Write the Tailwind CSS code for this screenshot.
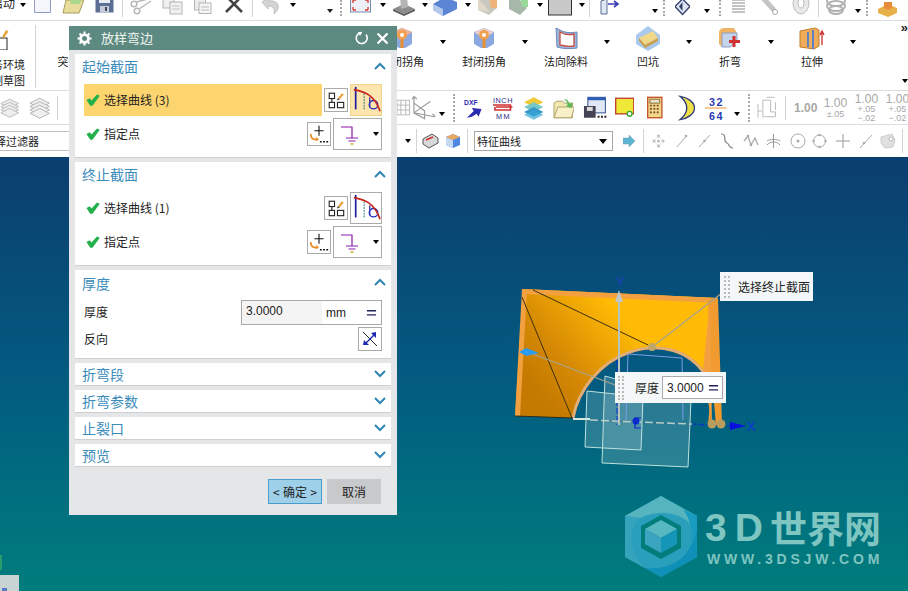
<!DOCTYPE html>
<html lang="zh"><head><meta charset="utf-8">
<script src="https://cdn.jsdelivr.net/npm/@tailwindcss/browser@4"></script>
</head>
<body class="bg-white">
<svg class="absolute w-0 h-0">
<defs>
<symbol id="chk" viewBox="0 0 14 12"><path d="M.5 6L3.800 4.200L5.500 6.500L11 .5L13.800 1.800L6.500 11.800H4.200Z" fill="#22b14c"/></symbol>
<symbol id="pick" viewBox="0 0 24 24"><g fill="none" stroke="#222" stroke-width="1.200"><rect x="4.600" y="4.600" width="5.800" height="5.800"/><rect x="4.600" y="14.600" width="5.800" height="5.800"/><rect x="13.600" y="14.600" width="6.800" height="5.800"/><path d="M7.500 10.400V14.600"/></g><path d="M14 10L18.500 4.500L20.500 6L16 11.500Z" fill="#e8a33c"/><path d="M14 10l-1 2.500 3-1z" fill="#333"/></symbol>
<symbol id="curve" viewBox="0 0 32 32"><g fill="none"><path d="M5 2V26" stroke="#1c1c9c" stroke-width="1.800"/><path d="M14 9V26" stroke="#1c6e6c" stroke-width="1" stroke-dasharray="2 1"/><path d="M20 13V24" stroke="#1c1c9c" stroke-width="1.200"/><circle cx="24" cy="21" r="4.500" stroke="#2030c0" stroke-width="1.500"/><path d="M3 5C14 7 25 10 31 28" stroke="#c8281c" stroke-width="1.800"/></g></symbol>
<symbol id="pt" viewBox="0 0 24 24"><path d="M12 3V14M7 8.500H17" stroke="#111" stroke-width="1.200"/><path d="M3 12C3 17 5 18 10 18" stroke="#e8902c" stroke-width="2" fill="none"/><path d="M9 15l3 3-3 2z" fill="#e8902c"/><path d="M13 20.500h2M16.500 20.500h2M20 20.500h2" stroke="#111" stroke-width="1.800"/></symbol>
<symbol id="gnd" viewBox="0 0 24 24"><g stroke="#8c1aa8" stroke-width="1.200" fill="none"><path d="M2 5H13V16M7 16H19M9.500 19H16.500"/></g><path d="M11.500 22H14.500" stroke="#c8a018" stroke-width="1.300"/></symbol>
<symbol id="gear" viewBox="0 0 16 16"><circle cx="8" cy="8" r="4.200" fill="none" stroke="#fff" stroke-width="3"/><path d="M8 .5V3M8 13V15.500M.5 8H3M13 8H15.500M2.700 2.700L4.500 4.500M11.500 11.500L13.300 13.300M2.700 13.300L4.500 11.500M11.500 4.500L13.300 2.700" stroke="#fff" stroke-width="2.200"/></symbol>
<symbol id="up" viewBox="0 0 12 8"><path d="M1 7L6 2L11 7" fill="none" stroke="#2f86b4" stroke-width="2"/></symbol>
<symbol id="down" viewBox="0 0 12 8"><path d="M1 1L6 6L11 1" fill="none" stroke="#2f86b4" stroke-width="2"/></symbol>
<symbol id="eq" viewBox="0 0 12 8"><path d="M1 1.500H11M1 6H11" stroke="#23235c" stroke-width="1.500"/></symbol>
<symbol id="layers" viewBox="0 0 22 24"><g stroke="#b4b4b4" fill="#efefef"><path d="M1 7L11 2L21 7L11 12Z"/><path d="M1 10.500L11 5.500L21 10.500L11 15.500Z"/><path d="M1 14L11 9L21 14L11 19Z"/><path d="M1 17.500L11 12.500L21 17.500L11 22.500Z"/></g></symbol>
</defs>
</svg>

<div class="relative w-[908px] h-[591px] overflow-hidden flex flex-col font-['Noto_Sans_CJK_SC','Noto_Sans',sans-serif] text-[12px] text-[#222]">

<!-- row 1 -->
<div class="flex items-start h-[21px] shrink-0 border-b border-[#dcdcdc] bg-white overflow-hidden">
 <span class="ml-[-9px] mt-[-7px] leading-[20px] w-[24px] whitespace-nowrap">启动</span>
 <span class="ml-[5px] mt-[3px] w-0 h-0 border-x-[3.5px] border-t-[4px] border-x-transparent border-t-black"></span>
 <svg class="ml-[8px] w-[17px] h-[20px]" viewBox="0 0 17 20"><path d="M.5 -5H16.500V12.500H.5Z" fill="#f4f6fb" stroke="#8f9cc0"/></svg>
 <svg class="ml-[11px] w-[22px] h-[20px]" viewBox="0 0 22 20"><path d="M1 13L4 0H22L17 13Z" fill="#e8dc9c" stroke="#a89c5c"/><path d="M10 -3L20 -2L18 4H8Z" fill="#a8d88c"/></svg>
 <svg class="ml-[11px] w-[19px] h-[20px]" viewBox="0 0 19 20"><rect x=".5" y="-5" width="18" height="17.500" fill="#5c6e94"/><rect x="4" y="-5" width="11" height="8" fill="#e8ecf4"/><rect x="5" y="6" width="9" height="6.500" fill="#c4ccdc"/><rect x="10" y="7" width="2" height="4" fill="#445"/></svg>
 <span class="ml-[8px] w-px h-[17px] bg-[#d4d4d4]"></span>
 <svg class="ml-[6px] w-[24px] h-[20px]" viewBox="0 0 24 20"><g fill="none" stroke="#b8b8b8" stroke-width="1.500"><circle cx="5" cy="4" r="2.800"/><circle cx="8" cy="11" r="2.800"/><path d="M7 2L23 -2M10 9L22 1"/></g></svg>
 <svg class="ml-[9px] w-[21px] h-[20px]" viewBox="0 0 21 20"><g fill="#f0f0f0" stroke="#b4b4b4"><rect x="1" y="-4" width="11" height="12"/><rect x="8" y="2" width="12" height="12"/></g><path d="M10 6h8M10 9h8" stroke="#c4c4c4"/></svg>
 <svg class="ml-[11px] w-[18px] h-[20px]" viewBox="0 0 18 20"><rect x=".5" y="-3" width="11" height="13" fill="#ededed" stroke="#b4b4b4"/><rect x="5" y="3" width="12" height="10.500" fill="#f6f6f6" stroke="#b4b4b4"/><path d="M7 7h8M7 10h8" stroke="#bbb"/></svg>
 <svg class="ml-[13px] w-[19px] h-[20px]" viewBox="0 0 19 20"><path d="M1 -4L17 12M17 -4L1 12" stroke="#444" stroke-width="2.600"/></svg>
 <span class="ml-[8px] w-px h-[17px] bg-[#d4d4d4]"></span>
 <svg class="ml-[8px] w-[20px] h-[20px]" viewBox="0 0 20 20"><path d="M1 2L7 -2V1C14 0 18 3 17 8C16 11 15 12 13 14C14 10 13 6 7 6V9Z" fill="#d4d4d4" stroke="#c0c0c0"/></svg>
 <span class="ml-[9px] mt-[3px] w-0 h-0 border-x-[3.5px] border-t-[4px] border-x-transparent border-t-black"></span>
 <span class="ml-[31px] mt-[9px] w-0 h-0 border-x-[3.5px] border-t-[4px] border-x-transparent border-t-[#222]"></span>
 <span class="ml-[7px] w-[3px] h-[16px] border-l-2 border-dotted border-[#aaa]"></span>
 <svg class="ml-[7px] w-[21px] h-[20px]" viewBox="0 0 21 20"><rect x=".5" y="-4" width="20" height="16" fill="#eef0f8" stroke="#7c88b0"/><path d="M3 0L6 0M3 0V3M18 0H15M18 0V3M3 10H6M3 10V7M18 10H15M18 10V7" stroke="#d8382c" stroke-width="1.300"/></svg>
 <span class="ml-[9px] mt-[3px] w-0 h-0 border-x-[3.5px] border-t-[4px] border-x-transparent border-t-black"></span>
 <svg class="ml-[6px] w-[24px] h-[20px]" viewBox="0 0 24 20"><path d="M1 9L12 4L23 9L12 14Z" fill="#8c8c8c"/><path d="M8 -4L15 -4L16 7L9 9Z" fill="#b4b4b4"/><path d="M1 9V11L12 16L23 11V9L12 14Z" fill="#5c5c5c"/></svg>
 <span class="ml-[6px] mt-[3px] w-0 h-0 border-x-[3.5px] border-t-[4px] border-x-transparent border-t-black"></span>
 <svg class="ml-[5px] w-[30px] h-[20px]" viewBox="0 0 30 20"><path d="M0 4L12 -3L24 2V9L10 16L0 10Z" fill="#5c84d4"/><path d="M0 4L10 9V16L0 10Z" fill="#b4c8ec"/></svg>
 <span class="ml-[2px] mt-[3px] w-0 h-0 border-x-[3.5px] border-t-[4px] border-x-transparent border-t-black"></span>
 <svg class="ml-[6px] w-[20px] h-[20px]" viewBox="0 0 20 20"><path d="M1 -2L12 -2L19 -2L20 8L12 15L1 10Z" fill="#c8c8c0"/><path d="M1 -2L13 12L1 10Z" fill="#e0d8c8"/><path d="M12 -2H20V8H14Z" fill="#f0b478"/></svg>
 <svg class="ml-[11px] w-[20px] h-[20px]" viewBox="0 0 20 20"><path d="M1 -2H10L19 8L12 15L1 9Z" fill="#a8b8a8"/><path d="M12 -2H20V7H14Z" fill="#98d898"/></svg>
 <span class="ml-[9px] mt-[3px] w-0 h-0 border-x-[3.5px] border-t-[4px] border-x-transparent border-t-black"></span>
 <svg class="ml-[5px] w-[24px] h-[20px]" viewBox="0 0 24 20"><rect x=".5" y="-4" width="23" height="19" fill="#c8c8c8" stroke="#333"/></svg>
 <span class="ml-[7px] mt-[3px] w-0 h-0 border-x-[3.5px] border-t-[4px] border-x-transparent border-t-black"></span>
 <span class="ml-[4px] w-px h-[17px] bg-[#d4d4d4]"></span>
 <svg class="ml-[10px] w-[20px] h-[20px]" viewBox="0 0 20 20"><path d="M1 1L7 -1V14H1Z" fill="#dfe6f4" stroke="#5c6e94"/><path d="M8 4H17M14 1L18 4L14 7" fill="none" stroke="#3c3cb4" stroke-width="1.600"/></svg>
 <span class="ml-[32px] mt-[9px] w-0 h-0 border-x-[3.5px] border-t-[4px] border-x-transparent border-t-black"></span>
 <span class="ml-[5px] w-[3px] h-[16px] border-l-2 border-dotted border-[#aaa]"></span>
 <svg class="ml-[9px] w-[15px] h-[20px]" viewBox="0 0 15 20"><path d="M7.500 -1L15 6.500L7.500 14.500L0 6.500Z" fill="#dde4f4" stroke="#39406c" stroke-width="1.400"/><path d="M7.500 2L4 6.500L7.500 11Z" fill="#39406c"/></svg>
 <span class="ml-[14px] mt-[9px] w-0 h-0 border-x-[3.5px] border-t-[4px] border-x-transparent border-t-black"></span>
 <span class="ml-[9px] w-[3px] h-[16px] border-l-2 border-dotted border-[#aaa]"></span>
 <svg class="ml-[9px] w-[15px] h-[20px]" viewBox="0 0 15 20"><g fill="none" stroke="#b0b0b0" stroke-width="1.300"><path d="M1 0H14M1 3H14M1 6H14M1 9H14M1 12H14"/></g></svg>
 <svg class="ml-[16px] w-[17px] h-[20px]" viewBox="0 0 17 20"><path d="M1 -2L12 10" stroke="#c4c4c4" stroke-width="5"/><circle cx="13" cy="12" r="2.500" fill="none" stroke="#aaa"/></svg>
 <svg class="ml-[12px] w-[20px] h-[20px]" viewBox="0 0 20 20"><ellipse cx="10" cy="3" rx="8" ry="11" fill="#e8e8e8" stroke="#c0c0c0"/><ellipse cx="10" cy="3" rx="3" ry="5" fill="#fff" stroke="#bbb"/></svg>
 <span class="ml-[7px] w-px h-[17px] bg-[#d4d4d4]"></span>
 <svg class="ml-[7px] w-[21px] h-[20px]" viewBox="0 0 21 20"><g fill="none" stroke="#b0b0b0" stroke-width="2"><ellipse cx="10" cy="1" rx="9" ry="5"/><ellipse cx="10" cy="6" rx="9" ry="5"/><ellipse cx="10" cy="10" rx="7" ry="4"/></g></svg>
 <span class="ml-[8px] mt-[9px] w-0 h-0 border-x-[3.5px] border-t-[4px] border-x-transparent border-t-black"></span>
 <span class="ml-[5px] w-[3px] h-[16px] border-l-2 border-dotted border-[#aaa]"></span>
 <svg class="ml-[9px] w-[19px] h-[20px]" viewBox="0 0 19 20"><path d="M0 9L10 4L19 8V13L10 17L0 13Z" fill="#e8b048"/><path d="M6 2H14V8L10 10L6 8Z" fill="#e88c3c"/></svg>
</div>

<!-- row 2 -->
<div class="flex h-[70px] shrink-0 border-b border-[#dcdcdc] bg-white text-[11px]">
 <div class="w-[36px] border-r border-[#d4d4d4] h-[63px] mt-[4px] shrink-0 flex flex-col items-end pr-[10px]">
  <svg class="self-start w-[9px] h-[22px] mt-[3px]" viewBox="0 0 9 22"><rect x="-6" y="10" width="13" height="12" fill="#fff" stroke="#222"/><path d="M2 9L6 2L8.500 3.500L4 10Z" fill="#e8a33c"/></svg>
  <span class="leading-[16px] mt-[6px] whitespace-nowrap">务环境</span>
  <span class="leading-[16px] whitespace-nowrap">制草图</span>
 </div>
 <div class="ml-[-3px] flex shrink-0">
  <div class="relative w-[82px] flex flex-col items-center shrink-0"><span class="mt-[31px] leading-[18px]">突出块</span></div>
  <div class="relative w-[82px] shrink-0"></div>
  <div class="relative w-[82px] shrink-0"></div>
  <div class="relative w-[82px] shrink-0"></div>
  <div class="relative w-[82px] flex flex-col items-center shrink-0">
   <svg class="mt-[6px] w-[26px] h-[25px]" viewBox="0 0 26 25"><path d="M3 5L13 1L23 5V17L16 21H10L3 17Z" fill="#8ca8e0"/><path d="M3 5L13 1L23 5L13 12Z" fill="#f0b090"/><circle cx="13" cy="8" r="5" fill="#f0a050"/><circle cx="13" cy="8" r="2" fill="#fff"/><path d="M13 12V21" stroke="#e89030" stroke-width="3"/></svg>
   <span class="leading-[18px]">封闭拐角</span>
   <span class="absolute right-[-3px] top-[19px] w-0 h-0 border-x-[3.5px] border-t-[4px] border-x-transparent border-t-black"></span>
  </div>
  <div class="relative w-[82px] flex flex-col items-center shrink-0">
   <svg class="mt-[6px] w-[26px] h-[25px]" viewBox="0 0 26 25"><path d="M3 5L13 1L23 5V17L16 21H10L3 17Z" fill="#8ca8e0"/><path d="M3 5L13 1L23 5L13 12Z" fill="#e8d0c8"/><circle cx="13" cy="8" r="5" fill="#f0a050"/><circle cx="13" cy="8" r="2" fill="#fff"/><path d="M13 12V21" stroke="#e89030" stroke-width="3"/></svg>
   <span class="leading-[18px]">封闭拐角</span>
   <span class="absolute right-[-3px] top-[19px] w-0 h-0 border-x-[3.5px] border-t-[4px] border-x-transparent border-t-black"></span>
  </div>
  <div class="relative w-[82px] flex flex-col items-center shrink-0">
   <svg class="mt-[6px] w-[26px] h-[25px]" viewBox="0 0 26 25"><path d="M3 1L7 3C12 6 18 6 24 5V21C18 22 10 22 4 20Z" fill="#9ab4dc" stroke="#6c88b8"/><path d="M7 5C12 8 17 8 21 7V19C16 20 11 19 7 18Z" fill="#fff" stroke="#c84c3c" stroke-width="1.300"/></svg>
   <span class="leading-[18px]">法向除料</span>
   <span class="absolute right-[-3px] top-[19px] w-0 h-0 border-x-[3.5px] border-t-[4px] border-x-transparent border-t-black"></span>
  </div>
  <div class="relative w-[82px] flex flex-col items-center shrink-0">
   <svg class="mt-[5px] w-[26px] h-[26px]" viewBox="0 0 26 26"><path d="M13 0L25 9V18L13 25L1 18V9Z" fill="#a8c8ec"/><path d="M4 12L18 5L23 12L10 19Z" fill="#f0d888"/><path d="M10 19L23 12V15L10 22L4 15V12Z" fill="#c8a050"/></svg>
   <span class="leading-[18px]">凹坑</span>
   <span class="absolute right-[-3px] top-[19px] w-0 h-0 border-x-[3.5px] border-t-[4px] border-x-transparent border-t-black"></span>
  </div>
  <div class="relative w-[82px] flex flex-col items-center shrink-0">
   <svg class="mt-[6px] w-[24px] h-[25px]" viewBox="0 0 24 25"><path d="M1 6C1 2 4 1 7 1H16L19 6H4V20L1 17Z" fill="#f0b464"/><path d="M4 6H19V14L12 20H4Z" fill="#c4d4ec" stroke="#8ca0c4"/><path d="M16 9V20M11 14.500H22" stroke="#d03030" stroke-width="3"/></svg>
   <span class="leading-[18px]">折弯</span>
   <span class="absolute right-[-3px] top-[19px] w-0 h-0 border-x-[3.5px] border-t-[4px] border-x-transparent border-t-black"></span>
  </div>
  <div class="relative w-[82px] flex flex-col items-center shrink-0">
   <svg class="mt-[6px] w-[26px] h-[25px]" viewBox="0 0 26 25"><path d="M1 4L16 1L20 3V19L15 22L1 20Z" fill="#f0ac58" stroke="#c47c28"/><path d="M9 5V20M14 3V22" stroke="#5c84c4" stroke-width="2"/><path d="M23 18V5M21 8L23 4L25 8" stroke="#d03030" fill="none" stroke-width="1.300"/></svg>
   <span class="leading-[18px]">拉伸</span>
   <span class="absolute right-[-3px] top-[19px] w-0 h-0 border-x-[3.5px] border-t-[4px] border-x-transparent border-t-black"></span>
  </div>
  <div class="w-[55px] shrink-0 flex flex-col items-end"><span class="mt-[-1px] font-bold leading-[16px] text-[13px] font-['Liberation_Sans']">»</span><span class="mt-[43px] w-0 h-0 border-x-[3.5px] border-t-[4px] border-x-transparent border-t-black"></span></div>
 </div>
</div>

<!-- row 3 -->
<div class="flex items-center h-[34px] shrink-0 border-b border-[#dcdcdc] bg-white">
 <svg class="w-[20px] h-[24px]"><use href="#layers"/></svg>
 <svg class="ml-[10px] w-[22px] h-[24px]"><use href="#layers"/></svg>
 <span class="ml-[6px] w-px h-[24px] bg-[#d4d4d4]"></span>
 <svg class="ml-[338px] w-[16px] h-[22px]" viewBox="0 0 16 22"><g fill="none" stroke="#b8b8b8"><rect x="1" y="3" width="13" height="15"/><path d="M1 8H14M1 13H14M5 3V18M10 3V18"/></g></svg>
 <svg class="w-[27px] h-[26px]" viewBox="0 0 27 26"><g fill="none" stroke="#9c9c9c" stroke-width="1.200"><path d="M3 1V18L24 22M3 18L20 6M6 4L3 1L1 4M22 19L25 22"/><path d="M3 8L14 16V24L3 18"/></g></svg>
 <span class="ml-[1px] mt-[12px] w-0 h-0 border-x-[3.5px] border-t-[4px] border-x-transparent border-t-black"></span>
 <span class="ml-[8px] w-[3px] h-[28px] border-l-2 border-dotted border-[#aaa]"></span>
 <svg class="ml-[8px] w-[20px] h-[24px]" viewBox="0 0 20 24"><text x="0" y="9" font-size="7" font-weight="700" fill="#2a2ab0" font-family="Liberation Sans">DXF</text><path d="M3 22L10 15L8 12L18 13L15 21L13 18L8 21Z" fill="#2a2ab0"/></svg>
 <svg class="ml-[9px] w-[22px] h-[24px]" viewBox="0 0 22 24"><text x="1" y="7" font-size="7.500" fill="#2c2c8c" font-family="Liberation Sans" textLength="20">INCH</text><text x="4" y="23" font-size="7.500" fill="#2c2c8c" font-family="Liberation Sans" textLength="14">MM</text><path d="M1 9H19V14H3V11M21 11H4" stroke="#d03030" fill="none" stroke-width="1.600"/></svg>
 <svg class="ml-[11px] w-[20px] h-[24px]" viewBox="0 0 20 24"><path d="M0 6L10 1L20 6L10 11Z" fill="#f0c838"/><path d="M0 11L10 6L20 11L10 16Z" fill="#78c8c8"/><path d="M0 16L10 11L20 16L10 21Z" fill="#3898c8"/><path d="M0 19L10 14L20 19L10 24Z" fill="#38a8d8" opacity=".7"/></svg>
 <svg class="ml-[9px] w-[22px] h-[24px]" viewBox="0 0 22 24"><path d="M1 22V7L4 5H10L12 7H20V22Z" fill="#f0e8b0" stroke="#b0a468"/><path d="M1 22L5 11H22L19 22Z" fill="#f8f0c8" stroke="#b0a468"/><path d="M11 3C15 3 16 5 17 8L20 6L19 12L13 10L15 9C15 6 14 5 11 3Z" fill="#58b858"/></svg>
 <svg class="ml-[9px] w-[24px] h-[24px]" viewBox="0 0 24 24"><rect x="5" y="1" width="18" height="16" fill="#dfe8f4" stroke="#2c4c8c"/><rect x="5" y="1" width="18" height="3" fill="#2c5cb4"/><rect x="1" y="10" width="12" height="12" fill="#445"/><rect x="4" y="11" width="6" height="4" fill="#ddd"/><path d="M15 21h2M18.500 21h2M22 21h2" stroke="#222" stroke-width="2"/></svg>
 <svg class="ml-[8px] w-[20px] h-[24px]" viewBox="0 0 20 24"><rect x=".7" y="2" width="18.600" height="16" fill="#f0e838" stroke="#c0402c" stroke-width="1.400"/><circle cx="15" cy="18" r="2.500" fill="#fff" stroke="#38a838" stroke-width="1.400"/></svg>
 <svg class="ml-[13px] w-[16px] h-[24px]" viewBox="0 0 16 24"><rect x=".7" y="1" width="14.600" height="21" fill="#f0d888" stroke="#c4582c" stroke-width="1.400"/><rect x="3" y="3" width="10" height="4" fill="#e8e4c8" stroke="#8c6c3c"/><path d="M3 9.500H13M3 13H13M3 16.500H13" stroke="#7c4c2c" stroke-width="1.800" stroke-dasharray="2 1.500"/></svg>
 <svg class="ml-[15px] w-[18px] h-[26px]" viewBox="0 0 18 26"><path d="M2 1C10 2 17 7 17 13C17 19 10 24 2 25C7 21 9 17 9 13C9 9 7 5 2 1Z" fill="#f0e048" stroke="#2c3c7c" stroke-width="1.400"/></svg>
 <svg class="ml-[10px] w-[22px] h-[26px]" viewBox="0 0 22 26"><text x="4" y="11" font-size="11" font-weight="700" fill="#2a3ab0" font-family="Liberation Sans" textLength="14">32</text><text x="4" y="25" font-size="11" font-weight="700" fill="#2a3ab0" font-family="Liberation Sans" textLength="14">64</text><path d="M0 13H22" stroke="#e89030"/></svg>
 <span class="ml-[7px] mt-[12px] w-0 h-0 border-x-[3.5px] border-t-[4px] border-x-transparent border-t-black"></span>
 <span class="ml-[8px] w-[3px] h-[28px] border-l-2 border-dotted border-[#aaa]"></span>
 <svg class="ml-[6px] w-[22px] h-[24px]" viewBox="0 0 22 24"><g fill="none" stroke="#bbb"><path d="M6 4H14V16H19V21H6Z"/><path d="M1 8V22M1 15H5M10 1H18M19 6V14"/></g></svg>
 <span class="ml-[7px] w-px h-[24px] bg-[#d4d4d4]"></span>
 <span class="ml-[8px] w-[21px] text-[12px] text-[#a8a8a8] font-['Liberation_Sans'] font-bold whitespace-nowrap">1.00</span>
 <div class="ml-[10px] w-[21px] flex flex-col items-center text-[#a8a8a8] font-['Liberation_Sans'] leading-[10px]"><span class="text-[12px] leading-[12px]">1.00</span><span class="text-[9px]">±.05</span></div>
 <div class="ml-[10px] w-[21px] flex flex-col items-center text-[#a8a8a8] font-['Liberation_Sans'] leading-[9px]"><span class="text-[12px] leading-[12px]">1.00</span><span class="text-[9px]">+.05</span><span class="text-[9px]">−.02</span></div>
 <div class="ml-[10px] w-[21px] flex flex-col items-center text-[#a8a8a8] font-['Liberation_Sans'] leading-[9px]"><span class="text-[12px] leading-[12px]">1.00</span><span class="text-[9px]">+.05</span><span class="text-[9px]">−.02</span></div>
</div>

<!-- row 4 -->
<div class="flex items-center h-[32px] shrink-0 bg-white">
 <div class="w-[100px] h-[20px] ml-[-5px] border border-[#c0c0c0] text-[11px] leading-[18px] whitespace-nowrap overflow-hidden"><span class="ml-[-1px]">择过滤器</span></div>
 <span class="ml-[310px] w-0 h-0 border-x-[3.5px] border-t-[4px] border-x-transparent border-t-black"></span>
 <span class="ml-[5px] w-px h-[24px] bg-[#d4d4d4]"></span>
 <svg class="ml-[5px] w-[17px] h-[16px]" viewBox="0 0 17 16"><path d="M1 6L10 1L16 5V10L7 15L1 11Z" fill="#d8d8d8" stroke="#555"/><path d="M4 7L11 4" stroke="#d03030" stroke-width="1.500"/></svg>
 <svg class="ml-[6px] w-[16px] h-[16px]" viewBox="0 0 16 16"><path d="M1 4L8 1L15 4V12L8 15L1 12Z" fill="#4c88e0"/><path d="M1 4L8 7V15L1 12Z" fill="#c4d8f4"/><path d="M1 4L8 1L15 4L8 7Z" fill="#e8a860"/></svg>
 <span class="ml-[6px] w-px h-[24px] bg-[#d4d4d4]"></span>
 <div class="ml-[6px] w-[139px] h-[20px] border border-[#a8a8a8] flex items-center justify-between pl-[2px] pr-[5px]"><span class="text-[11px]">特征曲线</span><span class="w-0 h-0 border-x-[4px] border-t-[5px] border-x-transparent border-t-black"></span></div>
 <svg class="ml-[10px] w-[12px] h-[12px]" viewBox="0 0 12 12"><path d="M0 3H6V0L12 6L6 12V9H0Z" fill="#5cb4d4" stroke="#7c9cac" stroke-width=".5"/></svg>
 <span class="ml-[8px] w-px h-[24px] bg-[#d4d4d4]"></span>
 <svg class="ml-[7px] w-[15px] h-[16px]" viewBox="0 0 15 16"><g fill="#bbb"><circle cx="3" cy="8" r="1.500"/><circle cx="12" cy="8" r="1.500"/><circle cx="7.500" cy="3" r="1.500"/><circle cx="7.500" cy="13" r="1.500"/><circle cx="7.500" cy="8" r="1.500"/></g><path d="M3 8L7.500 3L12 8L7.500 13Z" fill="none" stroke="#ccc" stroke-dasharray="1 1"/></svg>
 <svg class="ml-[10px] w-[12px] h-[14px]" viewBox="0 0 12 14"><path d="M1 13L11 1" stroke="#aaa"/><circle cx="10" cy="2" r="1.300" fill="#aaa"/></svg>
 <svg class="ml-[10px] w-[13px] h-[14px]" viewBox="0 0 13 14"><path d="M1 13L12 1" stroke="#aaa"/><circle cx="6.500" cy="7" r="1.300" fill="#aaa"/></svg>
 <svg class="ml-[9px] w-[13px] h-[16px]" viewBox="0 0 13 16"><path d="M1 1C8 1 2 8 7 10C10 11 8 15 13 15" fill="none" stroke="#888" stroke-width="1.200"/></svg>
 <svg class="ml-[10px] w-[16px] h-[16px]" viewBox="0 0 16 16"><path d="M1 8L5 3L8 12L12 5L15 12" fill="none" stroke="#aaa" stroke-width="1.300"/><circle cx="5" cy="3" r="1.300" fill="#aaa"/><circle cx="8" cy="12" r="1.300" fill="#aaa"/></svg>
 <svg class="ml-[7px] w-[15px] h-[16px]" viewBox="0 0 15 16"><path d="M7.500 1V15M1 8C3 6 12 6 14 8M1 12C4 8 11 8 14 12" fill="none" stroke="#999"/></svg>
 <svg class="ml-[9px] w-[16px] h-[16px]" viewBox="0 0 16 16"><circle cx="8" cy="8" r="7" fill="none" stroke="#aaa"/><circle cx="8" cy="8" r="1.500" fill="#aaa"/></svg>
 <svg class="ml-[6px] w-[15px] h-[16px]" viewBox="0 0 15 16"><circle cx="7.500" cy="8" r="6" fill="none" stroke="#aaa"/><g fill="#aaa"><circle cx="7.500" cy="2" r="1.200"/><circle cx="7.500" cy="14" r="1.200"/><circle cx="1.500" cy="8" r="1.200"/><circle cx="13.500" cy="8" r="1.200"/></g></svg>
 <svg class="ml-[9px] w-[14px] h-[14px]" viewBox="0 0 14 14"><path d="M7 0V14M0 7H14" stroke="#999"/></svg>
 <svg class="ml-[10px] w-[12px] h-[14px]" viewBox="0 0 12 14"><path d="M0 14L12 1" stroke="#aaa"/><circle cx="4" cy="9" r="1.300" fill="#aaa"/></svg>
 <svg class="ml-[8px] w-[16px] h-[16px]" viewBox="0 0 16 16"><path d="M1 4L12 1L15 7L13 14L5 15L1 10Z" fill="#e0e0e0" stroke="#ccc"/><circle cx="11" cy="6" r="2" fill="#fff" stroke="#bbb"/></svg>
 <span class="ml-[6px] w-px h-[24px] bg-[#d4d4d4]"></span>
</div>

<!-- canvas -->
<div class="relative flex-1 bg-gradient-to-b from-[#0b3e70] via-[#035a80] to-[#017d7c]">
 <svg class="absolute inset-0 w-[908px] h-[434px]" viewBox="0 157 908 434">
  <defs>
   <linearGradient id="o" x1="540" y1="395" x2="625" y2="320" gradientUnits="userSpaceOnUse"><stop offset="0" stop-color="#c47a00"/><stop offset=".35" stop-color="#d48804"/><stop offset="1" stop-color="#ffbb05"/></linearGradient>
  </defs>
  <path d="M523 289L718 298L713 350L703 372C690 350 660 342 630 352C600 362 578 390 573 418L515 416Z" fill="url(#o)"/>
  <path d="M523 289L718 298L717 303L523 294Z" fill="#f2a040"/>
  <path d="M522 289L527 290L520 416H515Z" fill="#f2a040"/>
  <path d="M708 300L718 298L722 425H716L712 380L708 425H711Z" fill="#f09a30"/>
  <path d="M703 370L710 300L712 425Z" fill="#f2a040"/>
  <path d="M573 418C578 390 600 362 630 352C660 342 690 350 706 376" fill="none" stroke="#e8a868" stroke-width="3"/>
  <path d="M573 418C578 390 600 362 630 352C660 342 690 350 706 376" fill="none" stroke="#c8c0a8" stroke-width="1" stroke-dasharray="2 2"/>
  <path d="M533 290L648 345M522 297L572 418" stroke="#3c3010" stroke-width="1" fill="none"/>
  <path d="M515 416L573 418" stroke="#2c2c1c" stroke-width="1"/>
  <path d="M573 419H590" stroke="#d8e8e0" stroke-width="2"/>
  <!-- planes -->
  <g fill="#cfe8e4" fill-opacity=".2" stroke="#bfe0dc" stroke-width="1">
   <path d="M587 391L643 397L641 450L585 447Z"/>
   <path d="M605 376L691 400L688 467L602 463Z"/>
  </g>
  <path d="M628 354L682 358L683 420M628 354L626 420" fill="none" stroke="#7c9ce8" stroke-width="1"/>
  <!-- axes -->
  <path d="M619 295V425" stroke="#b4c4c0" stroke-width="2"/>
  <path d="M619 290L615 302H623Z" fill="#c4c8c4"/>
  <path d="M617 360V425" stroke="#0c30d0" stroke-width="1" stroke-dasharray="6 2"/>
  <path d="M590 420L636 422L692 424" stroke="#b8ccc8" stroke-width="1.500" stroke-dasharray="8 3"/>
  <path d="M692 424L730 426" stroke="#0c30d0" stroke-width="1.200" stroke-dasharray="5 2"/>
  <circle cx="636" cy="421" r="3.500" fill="#0c30d0"/>
  <path d="M641 418H635V428H641" fill="none" stroke="#1020d0" stroke-width="1.200"/>
  <path d="M730 422L746 426L730 430Z" fill="#0a10e0"/>
  <text x="747" y="431" font-size="13" fill="#1030e0" font-family="Liberation Sans">X</text>
  <text x="616" y="286" font-size="13" fill="#1c40c0" font-family="Liberation Sans">Y</text>
  <!-- leaders -->
  <path d="M652 347L722 293M530 353L618 386" stroke="#a8a48c" stroke-width="1.300" fill="none"/>
  <circle cx="652" cy="347" r="4" fill="#c0a868"/>
  <circle cx="712" cy="424" r="4.500" fill="#b89c5c"/>
  <circle cx="721" cy="424" r="4.500" fill="#b89c5c"/>
  <path d="M519 352L526 348L539 353L526 356Z" fill="#2c9cf0"/>
  <!-- logo -->
  <path d="M661 496L697 516V557L661 577L625 557V516Z" fill="#2a9fbc"/>
  <path d="M661 496L697 516V536C690 512 660 508 640 518L625 516Z" fill="#55b4bd"/>
  <path d="M697 516V557L679 567C693 550 697 530 683 509Z" fill="#1a9cc0"/>
  <path d="M697 557L661 577L645 568C670 570 690 560 697 530Z" fill="#0f90b8"/>
  <path d="M625 516V557L645 568C630 555 626 530 640 518Z" fill="#36a3bd"/>
  <path d="M661 515L681 526V548L661 559L641 548V526Z" fill="#027d7c"/>
  <path d="M661 520L677 529L661 538L645 529Z" fill="#58b8c2"/>
  <path d="M645 529L661 538V553L645 544Z" fill="#3ba5c0"/>
  <path d="M677 529L661 538V553L677 544Z" fill="#1596b9"/>
  <!-- corner remnants -->
  <path d="M1 555V570" stroke="#3aa868" stroke-width="1.500"/>
 </svg>

 <!-- watermark -->
 <div class="absolute left-[705px] top-[349px] flex flex-col text-[#7fc5c1]">
  <div class="flex items-center h-[42px] font-bold leading-none whitespace-nowrap"><span class="font-['Liberation_Sans'] text-[39px] tracking-[8px] w-[65px]">3D</span><span class="text-[37px]">世界网</span></div>
  <div class="mt-[5px] ml-[2px] font-['Liberation_Sans'] text-[14px] tracking-[3.8px] leading-[13px] font-bold whitespace-nowrap">WWW.3DSJW.COM</div>
 </div>

 <!-- bottom-left remnant -->
 <div class="absolute left-0 top-[418px] w-[19px] h-[16px] bg-[#c8d4d4] flex items-end pl-[2px]"><span class="w-[5px] h-[3px] bg-[#5c78c8]"></span></div>

 <!-- handles -->
 <div class="absolute left-[720px] top-[115px] w-[93px] h-[29px] bg-[#f3f7f7] flex items-center pl-[4px]">
  <span class="w-[6px] h-[22px] border-x-2 border-dotted border-[#bbb]"></span><span class="ml-[8px] text-[12px] text-[#222] whitespace-nowrap">选择终止截面</span>
 </div>
 <div class="absolute left-[615px] top-[215px] w-[111px] h-[31px] bg-[#f3f7f7] flex items-center pl-[3px]">
  <span class="w-[6px] h-[24px] border-x-2 border-dotted border-[#bbb]"></span><span class="ml-[11px] text-[12px] text-[#222]">厚度</span>
  <div class="ml-[3px] w-[61px] h-[23px] border border-[#aaa] bg-white flex items-center justify-between pl-[4px] pr-[3px] font-['Liberation_Sans'] text-[12px]"><span>3.0000</span><svg class="w-[11px] h-[8px]"><use href="#eq"/></svg></div>
 </div>
</div>

<!-- dialog -->
<div class="absolute left-[69px] top-[26px] w-[328px] h-[489px] bg-[#e5e6e7] flex flex-col">
 <div class="h-[24px] bg-[#5d8a80] flex items-center text-white shrink-0 pl-[8px] pr-[8px]">
  <svg class="w-[15px] h-[15px]"><use href="#gear"/></svg>
  <span class="ml-[9px] text-[13px] text-[#eef4f2]">放样弯边</span>
  <svg class="ml-auto w-[14px] h-[14px]" viewBox="0 0 14 14"><path d="M11 3.500A5.500 5.500 0 1 1 7 1.500" fill="none" stroke="#fff" stroke-width="1.600"/><path d="M3 1L7 1.500L5 5Z" fill="#fff"/></svg>
  <svg class="ml-[7px] w-[13px] h-[13px]" viewBox="0 0 13 13"><path d="M1.500 1.500L11.500 11.500M11.500 1.500L1.500 11.500" stroke="#fff" stroke-width="2.200"/></svg>
 </div>
 <div class="flex flex-col gap-[4px] px-[6px] pt-[4px]">

  <!-- panel 1 -->
  <div class="h-[104px] bg-white border-b border-[#cfcfcf] flex flex-col">
   <div class="h-[24px] flex items-center justify-between pl-[7px] pr-[5px]"><span class="text-[14px] mt-[1px] text-[#3b8cba]">起始截面</span><svg class="w-[12px] h-[8px]"><use href="#up"/></svg></div>
   <div class="h-[32px] mt-[6px] ml-[9px] flex items-center">
    <div class="w-[238px] h-[32px] bg-[#fdd56e] flex items-center pl-[2px]"><svg class="w-[14px] h-[12px]"><use href="#chk"/></svg><span class="ml-[4px]">选择曲线 (3)</span></div>
    <button class="ml-[2px] w-[24px] h-[24px] border border-[#aaa] bg-white"><svg class="w-[22px] h-[22px]"><use href="#pick"/></svg></button>
    <button class="ml-[2px] w-[32px] h-[32px] border border-[#f0d48c] bg-[#fde5b0]"><svg class="w-[30px] h-[30px]"><use href="#curve"/></svg></button>
   </div>
   <div class="h-[32px] mt-[2px] ml-[9px] flex items-center">
    <div class="w-[221px] flex items-center pl-[2px]"><svg class="w-[14px] h-[12px]"><use href="#chk"/></svg><span class="ml-[4px]">指定点</span></div>
    <button class="ml-[2px] w-[24px] h-[24px] border border-[#aaa] bg-white"><svg class="w-[22px] h-[22px]"><use href="#pt"/></svg></button>
    <div class="ml-[2px] w-[49px] h-[32px] border border-[#aaa] bg-white flex items-center pl-[5px]"><svg class="w-[24px] h-[24px]"><use href="#gnd"/></svg><span class="ml-[10px] w-0 h-0 border-x-[3px] border-t-[4px] border-x-transparent border-t-black"></span></div>
   </div>
  </div>

  <!-- panel 2 -->
  <div class="h-[104px] bg-white border-b border-[#cfcfcf] flex flex-col">
   <div class="h-[24px] flex items-center justify-between pl-[7px] pr-[5px]"><span class="text-[14px] mt-[1px] text-[#3b8cba]">终止截面</span><svg class="w-[12px] h-[8px]"><use href="#up"/></svg></div>
   <div class="h-[32px] mt-[6px] ml-[9px] flex items-center">
    <div class="w-[238px] h-[32px] flex items-center pl-[2px]"><svg class="w-[14px] h-[12px]"><use href="#chk"/></svg><span class="ml-[4px]">选择曲线 (1)</span></div>
    <button class="ml-[2px] w-[24px] h-[24px] border border-[#aaa] bg-white"><svg class="w-[22px] h-[22px]"><use href="#pick"/></svg></button>
    <button class="ml-[2px] w-[32px] h-[32px] border border-[#aaa] bg-white"><svg class="w-[30px] h-[30px]"><use href="#curve"/></svg></button>
   </div>
   <div class="h-[32px] mt-[2px] ml-[9px] flex items-center">
    <div class="w-[221px] flex items-center pl-[2px]"><svg class="w-[14px] h-[12px]"><use href="#chk"/></svg><span class="ml-[4px]">指定点</span></div>
    <button class="ml-[2px] w-[24px] h-[24px] border border-[#aaa] bg-white"><svg class="w-[22px] h-[22px]"><use href="#pt"/></svg></button>
    <div class="ml-[2px] w-[49px] h-[32px] border border-[#aaa] bg-white flex items-center pl-[5px]"><svg class="w-[24px] h-[24px]"><use href="#gnd"/></svg><span class="ml-[10px] w-0 h-0 border-x-[3px] border-t-[4px] border-x-transparent border-t-black"></span></div>
   </div>
  </div>

  <!-- panel 3 -->
  <div class="h-[89px] bg-white border-b border-[#cfcfcf] flex flex-col">
   <div class="h-[24px] flex items-center justify-between pl-[7px] pr-[5px]"><span class="text-[14px] mt-[2px] text-[#3b8cba]">厚度</span><svg class="w-[12px] h-[8px]"><use href="#up"/></svg></div>
   <div class="mt-[6px] ml-[9px] flex items-center h-[25px]">
    <span class="w-[157px] mb-[1px]">厚度</span>
    <div class="w-[141px] h-[25px] border border-[#a8a8a8] bg-white flex items-center"><span class="w-[80px] h-[23px] bg-[#f4f4f4] pl-[4px] leading-[21px] font-['Liberation_Sans'] text-[12px]">3.0000</span><span class="ml-[4px] text-[12px] font-['Liberation_Sans']">mm</span><svg class="ml-auto mr-[4px] w-[11px] h-[8px]"><use href="#eq"/></svg></div>
   </div>
   <div class="mt-[2px] ml-[9px] flex items-center h-[24px]">
    <span class="w-[274px]">反向</span>
    <button class="w-[24px] h-[24px] border border-[#aaa] bg-white flex items-center justify-center"><svg class="w-[18px] h-[18px]" viewBox="0 0 18 18"><path d="M2 2L16 16" stroke="#222"/><path d="M4 14L14 4" stroke="#1c2cb0" stroke-width="1.500"/><path d="M15 2L15 8L10 3ZM2 15L8 15L3 10Z" fill="#1c2cb0"/></svg></button>
   </div>
  </div>

  <div class="h-[23px] bg-white border-b border-[#cfcfcf] flex items-center justify-between pl-[7px] pr-[5px]"><span class="text-[14px] mt-[1px] text-[#3b8cba]">折弯段</span><svg class="w-[12px] h-[8px] mb-[1px]"><use href="#down"/></svg></div>
  <div class="h-[23px] bg-white border-b border-[#cfcfcf] flex items-center justify-between pl-[7px] pr-[5px]"><span class="text-[14px] mt-[1px] text-[#3b8cba]">折弯参数</span><svg class="w-[12px] h-[8px] mb-[1px]"><use href="#down"/></svg></div>
  <div class="h-[23px] bg-white border-b border-[#cfcfcf] flex items-center justify-between pl-[7px] pr-[5px]"><span class="text-[14px] mt-[1px] text-[#3b8cba]">止裂口</span><svg class="w-[12px] h-[8px] mb-[1px]"><use href="#down"/></svg></div>
  <div class="h-[23px] bg-white border-b border-[#cfcfcf] flex items-center justify-between pl-[7px] pr-[5px]"><span class="text-[14px] mt-[1px] text-[#3b8cba]">预览</span><svg class="w-[12px] h-[8px] mb-[1px]"><use href="#down"/></svg></div>
 </div>
 <div class="flex justify-end gap-[5px] pr-[16px] mt-[12px]">
  <button class="w-[54px] h-[25px] bg-[#9ed0ea] border border-[#4a9ccc] text-[12px] text-[#222] flex items-center justify-between px-[4px]"><span>&lt;</span><span>确定</span><span>&gt;</span></button>
  <button class="w-[54px] h-[25px] bg-[#c8c9cb] text-[12px] text-[#222]">取消</button>
 </div>
</div>
</div>
</body></html>
